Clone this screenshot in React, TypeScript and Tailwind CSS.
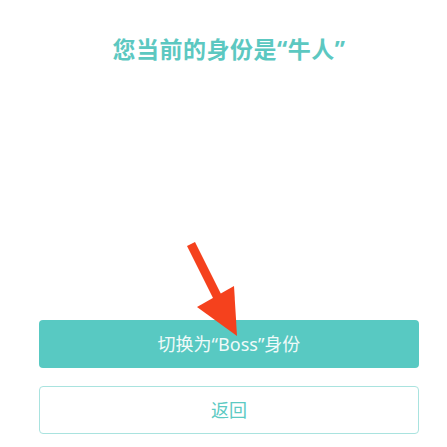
import React from "react";

export default function App() {
  const font = { fontFamily: '"Noto Sans", "Noto Sans CJK SC", sans-serif' };
  return (
    <div className="relative w-[447px] h-[447px] bg-white overflow-hidden" style={font}>
      <div className="flex flex-col pl-[39px] pt-[33px]">
        <div className="w-[380px] h-[32px] flex items-center justify-center text-[23px] font-bold text-[#5cc8c1] leading-none tracking-[0.5px]">
          您当前的身份是“牛人”
        </div>
        <button className="mt-[255px] w-[380px] h-[48px] rounded-[4px] bg-[#58c9c2] text-[18px] text-[#effaf9] flex items-center justify-center">
          切换为“Boss”身份
        </button>
        <button className="mt-[18px] w-[380px] h-[48px] rounded-[4px] border border-[#a9e3df] bg-white text-[18px] text-[#5ccac3] flex items-center justify-center">
          返回
        </button>
      </div>
      <svg className="absolute left-0 top-0 pointer-events-none" width="447" height="447" viewBox="0 0 447 447">
        <line x1="191" y1="244" x2="218" y2="298" stroke="#f5411d" strokeWidth="9" />
        <polygon points="197,307 234,286 237,336" fill="#f5411d" />
      </svg>
    </div>
  );
}
